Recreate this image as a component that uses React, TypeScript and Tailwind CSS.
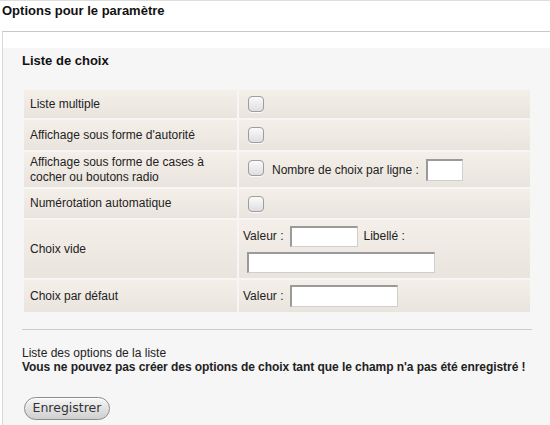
import React from "react";

function Check({ className = "" }: { className?: string }) {
  return (
    <span
      className={`block w-[16px] h-[16px] rounded-[4px] border border-[#9d9d9d] bg-gradient-to-b from-[#fbfbfb] to-[#dedede] shadow-[0_1px_0_rgba(255,255,255,0.8)] ${className}`}
    />
  );
}

function Field({ w, h = 21 }: { w: number; h?: number }) {
  return (
    <span
      className="block bg-white border-t-2 border-l-2 border-r border-b border-t-[#9a9a9a] border-l-[#9a9a9a] border-r-[#cfcfcf] border-b-[#cfcfcf]"
      style={{ width: w, height: h }}
    />
  );
}

function Row({
  label,
  h,
  children,
}: {
  label: React.ReactNode;
  h: string;
  children?: React.ReactNode;
}) {
  return (
    <div className={`grid grid-cols-[213px_1fr] gap-[2px] ${h}`}>
      <div className="flex items-center pl-[6px] leading-[15px] bg-gradient-to-b from-[#f5efe9] to-[#eae4df]">
        {label}
      </div>
      <div className="flex items-center pl-[4px] bg-gradient-to-b from-[#f5efe9] to-[#eae4df]">
        {children}
      </div>
    </div>
  );
}

export default function App() {
  return (
    <div className="w-[550px] h-[425px] overflow-hidden bg-white font-['Liberation_Sans',Arial,sans-serif] text-[12px] text-[#222]">
      {/* Header */}
      <div className="h-[31px] border-t border-[#dedede] pl-[2px] pt-[2px] text-[13px] font-bold leading-[15px] text-[#111]">
        Options pour le paramètre
      </div>

      {/* Fieldset */}
      <div className="ml-[2px] h-[394px] border-t border-l border-t-[#c8c8c8] border-l-[#d8d8d8] pt-[16px]">
        <div className="h-full bg-[#f6f6f6] pl-[19px] pr-[18px] pt-[5px]">
          <h2 className="text-[13px] font-bold leading-[15px] text-[#111]">Liste de choix</h2>

          <div className="mt-[20px] flex flex-col gap-[2px] p-[2px]">
            <Row label="Liste multiple" h="h-[28px]">
              <Check className="ml-[5px]" />
            </Row>
            <Row label="Affichage sous forme d'autorité" h="h-[30px]">
              <Check className="ml-[5px]" />
            </Row>
            <Row
              label={
                <span>
                  Affichage sous forme de cases à
                  <br />
                  cocher ou boutons radio
                </span>
              }
              h="h-[35px]"
            >
              <Check className="ml-[5px] -mt-[4px]" />
              <span className="ml-[8px]">Nombre de choix par ligne :</span>
              <span className="ml-[7px]">
                <Field w={37} h={22} />
              </span>
            </Row>
            <Row label="Numérotation automatique" h="h-[29px]">
              <Check className="ml-[5px]" />
            </Row>
            <Row label="Choix vide" h="h-[58px]">
              <div className="flex flex-col gap-[5px]">
                <div className="flex items-center">
                  <span>Valeur :</span>
                  <span className="ml-[7px]">
                    <Field w={68} />
                  </span>
                  <span className="ml-[5px]">Libellé :</span>
                </div>
                <span className="ml-[4px]">
                  <Field w={188} />
                </span>
              </div>
            </Row>
            <Row label="Choix par défaut" h="h-[32px]">
              <span>Valeur :</span>
              <span className="ml-[7px]">
                <Field w={108} h={22} />
              </span>
            </Row>
          </div>

          <hr className="mt-[15px] border-0 border-t border-[#cccccc]" />

          <p className="mt-[16px] leading-[14px]">Liste des options de la liste</p>
          <p className="leading-[14px] font-bold tracking-[-0.06px]">
            Vous ne pouvez pas créer des options de choix tant que le champ n'a pas été enregistré !
          </p>

          <button className="mt-[23px] ml-[2px] h-[23px] w-[86px] rounded-full border border-[#8c8c8c] bg-gradient-to-b from-[#f6f6f6] to-[#cfcfcf] font-['DejaVu_Sans',sans-serif] text-[12.5px] text-[#333] shadow-[inset_0_1px_0_#fff]">
            Enregistrer
          </button>
        </div>
      </div>
    </div>
  );
}
